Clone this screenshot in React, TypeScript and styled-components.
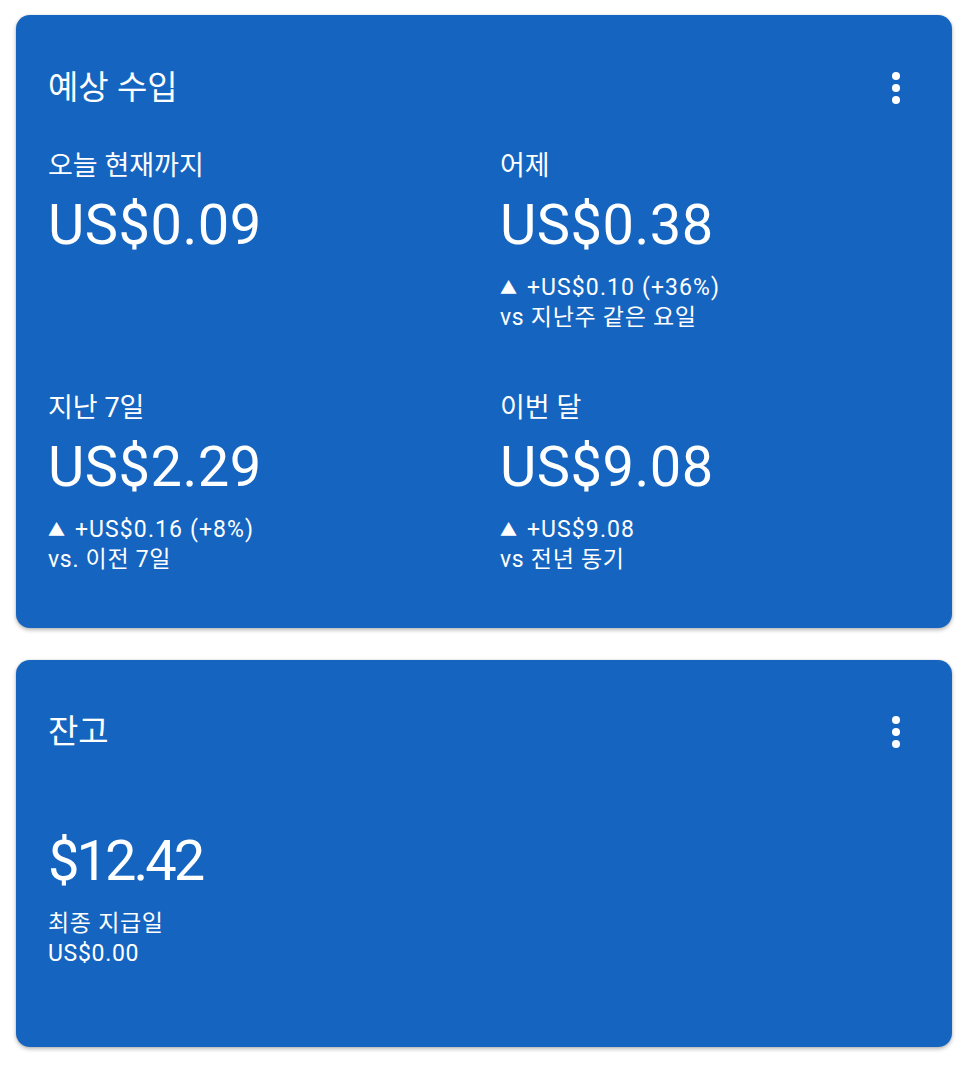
import React from 'react';
import styled, { createGlobalStyle } from 'styled-components';

const GlobalStyle = createGlobalStyle`
  html, body {
    margin: 0;
    padding: 0;
    background: #ffffff;
  }
  body {
    font-family: Roboto, "Noto Sans CJK KR", sans-serif;
    color: #ffffff;
  }
`;

interface StatProps {
  label: string;
  value: string;
  delta?: string;
  compare?: string;
}

const stats: StatProps[] = [
  { label: '오늘 현재까지', value: 'US$0.09' },
  { label: '어제', value: 'US$0.38', delta: '+US$0.10 (+36%)', compare: 'vs 지난주 같은 요일' },
  { label: '지난 7일', value: 'US$2.29', delta: '+US$0.16 (+8%)', compare: 'vs. 이전 7일' },
  { label: '이번 달', value: 'US$9.08', delta: '+US$9.08', compare: 'vs 전년 동기' },
];

const MoreIcon = () => (
  <svg width="48" height="48" viewBox="0 0 24 24" fill="#ffffff">
    <circle cx="12" cy="6" r="2" />
    <circle cx="12" cy="12" r="2" />
    <circle cx="12" cy="18" r="2" />
  </svg>
);

const Stat: React.FC<StatProps> = ({ label, value, delta, compare }) => (
  <StatCell>
    <Label>{label}</Label>
    <Value>{value}</Value>
    {delta && (
      <SubLine first wide>
        <Arrow>▲</Arrow> {delta}
      </SubLine>
    )}
    {compare && <SubLine>{compare}</SubLine>}
  </StatCell>
);

const App: React.FC = () => {
  return (
    <Page>
      <GlobalStyle />
      <Card top={49} bottom={53}>
        <Header>
          <Title>예상 수입</Title>
          <MenuButton aria-label="more">
            <MoreIcon />
          </MenuButton>
        </Header>
        <StatGrid>
          {stats.map((s) => (
            <Stat key={s.label} {...s} />
          ))}
        </StatGrid>
      </Card>
      <Card top={48} bottom={78}>
        <Header>
          <Title>잔고</Title>
          <MenuButton aria-label="more">
            <MoreIcon />
          </MenuButton>
        </Header>
        <Balance>
          <BalanceValue>$12.42</BalanceValue>
          <SubLine first>최종 지급일</SubLine>
          <SubLine>US$0.00</SubLine>
        </Balance>
      </Card>
    </Page>
  );
};

export default App;

const Page = styled.div`
  width: 936px;
  padding: 15px 13px 19px 16px;
  display: flex;
  flex-direction: column;
  gap: 32px;
`;

const Card = styled.section<{ top: number; bottom: number }>`
  background: #1565c0;
  border-radius: 14px;
  box-shadow: 0 2px 4px rgba(0, 0, 0, 0.28), 0 0 2px rgba(0, 0, 0, 0.12);
  padding: ${({ top, bottom }) => `${top}px 32px ${bottom}px 32px`};
  display: flex;
  flex-direction: column;
`;

const Header = styled.div`
  display: flex;
  align-items: center;
  justify-content: space-between;
  height: 48px;
`;

const Title = styled.h2`
  margin: 0;
  font-size: 33px;
  font-weight: 400;
  line-height: 48px;
`;

const MenuButton = styled.button`
  width: 48px;
  height: 48px;
  padding: 0;
  border: none;
  background: transparent;
  display: flex;
  align-items: center;
  justify-content: center;
`;

const StatGrid = styled.div`
  margin-top: 35px;
  display: grid;
  grid-template-columns: 1fr 1fr;
  column-gap: 32px;
  row-gap: 56px;
`;

const StatCell = styled.div`
  display: flex;
  flex-direction: column;
`;

const Label = styled.div`
  font-size: 27px;
  line-height: 34px;
  padding-top: 2px;
`;

const Value = styled.div`
  font-size: 56px;
  line-height: 84px;
  letter-spacing: 0.5px;
`;

const SubLine = styled.div<{ first?: boolean; wide?: boolean }>`
  font-size: 23px;
  line-height: 30px;
  letter-spacing: ${({ wide }) => (wide ? '1.1px' : '0.7px')};
  margin-top: ${({ first }) => (first ? '6px' : '0')};
`;

const Arrow = styled.span`
  font-size: 17px;
  vertical-align: 1px;
  margin-right: 2px;
`;

const Balance = styled.div`
  margin-top: 63px;
  display: flex;
  flex-direction: column;
`;

const BalanceValue = styled.div`
  font-size: 56px;
  line-height: 84px;
  letter-spacing: -3px;
`;
